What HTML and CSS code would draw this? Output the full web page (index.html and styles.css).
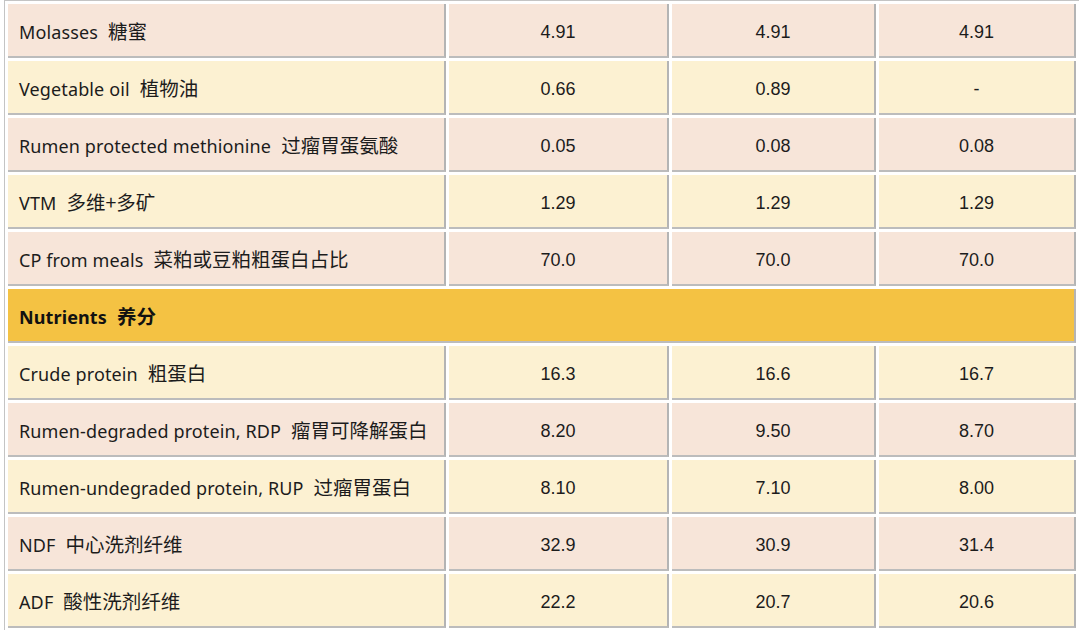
FILE: index.html
```html
<!DOCTYPE html>
<html lang="zh">
<head>
<meta charset="utf-8">
<link rel="stylesheet" href="styles.css">
</head>
<body>
<table class="feed">
  <colgroup>
    <col class="c1"><col class="c2"><col class="c3"><col class="c4">
  </colgroup>
  <tbody>
    <tr class="pink"><td class="label">Molasses<span class="zh">糖蜜</span></td><td>4.91</td><td>4.91</td><td>4.91</td></tr>
    <tr class="yellow"><td class="label">Vegetable oil<span class="zh">植物油</span></td><td>0.66</td><td>0.89</td><td>-</td></tr>
    <tr class="pink"><td class="label">Rumen protected methionine<span class="zh">过瘤胃蛋氨酸</span></td><td>0.05</td><td>0.08</td><td>0.08</td></tr>
    <tr class="yellow"><td class="label">VTM<span class="zh">多维+多矿</span></td><td>1.29</td><td>1.29</td><td>1.29</td></tr>
    <tr class="pink"><td class="label">CP from meals<span class="zh">菜粕或豆粕粗蛋白占比</span></td><td>70.0</td><td>70.0</td><td>70.0</td></tr>
    <tr class="section"><td class="label" colspan="4">Nutrients<span class="zh">养分</span></td></tr>
    <tr class="yellow"><td class="label">Crude protein<span class="zh">粗蛋白</span></td><td>16.3</td><td>16.6</td><td>16.7</td></tr>
    <tr class="pink"><td class="label">Rumen-degraded protein, RDP<span class="zh">瘤胃可降解蛋白</span></td><td>8.20</td><td>9.50</td><td>8.70</td></tr>
    <tr class="yellow"><td class="label">Rumen-undegraded protein, RUP<span class="zh">过瘤胃蛋白</span></td><td>8.10</td><td>7.10</td><td>8.00</td></tr>
    <tr class="pink"><td class="label">NDF<span class="zh">中心洗剂纤维</span></td><td>32.9</td><td>30.9</td><td>31.4</td></tr>
    <tr class="yellow"><td class="label">ADF<span class="zh">酸性洗剂纤维</span></td><td>22.2</td><td>20.7</td><td>20.6</td></tr>
  </tbody>
</table>
</body>
</html>
```

FILE: styles.css
```css
html, body {
  margin: 0;
  padding: 0;
  background: #ffffff;
}

.feed {
  margin-left: 4px;
  border-collapse: separate;
  border-spacing: 3px;
  border-left: 1px solid #c4c4c4;
  border-top: 1px solid #c4c4c4;
  table-layout: fixed;
  width: 1075px;
  color: #1c1c1c;
}

.c1 { width: 438px; }
.c2 { width: 220px; }
.c3 { width: 204px; }
.c4 { width: 197px; }

.feed td {
  box-sizing: border-box;
  height: 54px;
  padding: 4px 0 0 0;
  text-align: center;
  vertical-align: middle;
  font-family: "Liberation Sans", Arial, sans-serif;
  font-size: 18px;
  border-right: 2px solid #b4b4b4;
  border-bottom: 2px solid #bcbcbc;
  white-space: nowrap;
}

.feed td.label {
  text-align: left;
  padding: 0 0 0 11px;
  font-family: "Noto Sans", "Noto Sans CJK SC", sans-serif;
  font-size: 18px;
  letter-spacing: 0.12px;
}

.zh {
  font-family: "Noto Sans CJK SC", sans-serif;
  font-size: 19.5px;
  letter-spacing: 0;
  margin-left: 10px;
}

.pink td { background: #f7e5d9; }
.yellow td { background: #fcf1d2; }
.section td {
  background: #f4c243;
  font-weight: bold;
  color: #111111;
}
```
